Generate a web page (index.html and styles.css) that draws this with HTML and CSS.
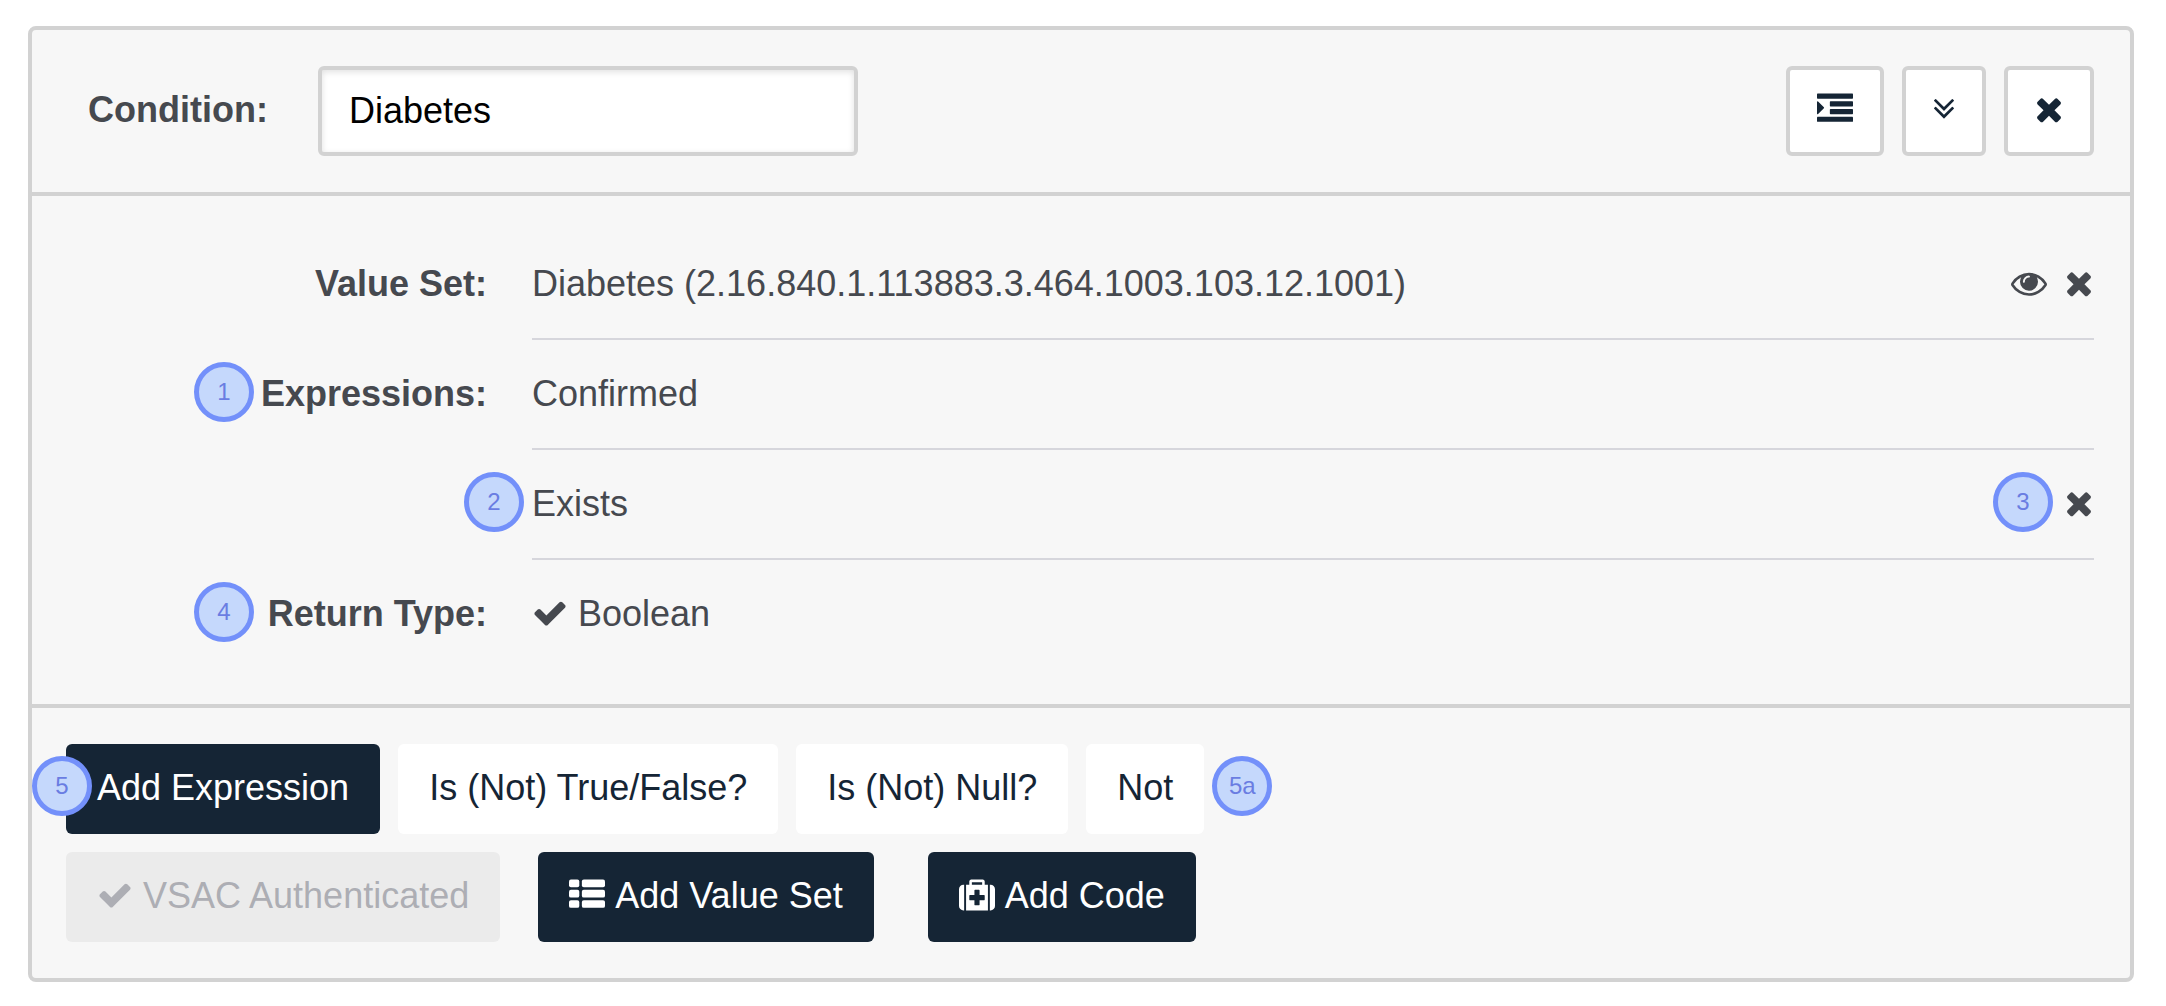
FILE: index.html
```html
<!DOCTYPE html>
<html lang="en">
<head>
<meta charset="utf-8">
<meta name="viewport" content="width=device-width, initial-scale=1">
<title>Condition</title>
<link rel="stylesheet" href="styles.css">
</head>
<body>
<svg class="sprite" aria-hidden="true">
  <symbol id="times" viewBox="199 0 1394 1792"><path d="M1490 1322q0 40-28 68l-136 136q-28 28-68 28t-68-28l-294-294-294 294q-28 28-68 28t-68-28l-136-136q-28-28-28-68t28-68l294-294-294-294q-28-28-28-68t28-68l136-136q28-28 68-28t68 28l294 294 294-294q28-28 68-28t68 28l136 136q28 28 28 68t-28 68l-294 294 294 294q28 28 28 68z"/></symbol>
  <symbol id="check" viewBox="0 0 1792 1792"><path d="M1671 566q0 40-28 68l-724 724-136 136q-28 28-68 28t-68-28l-136-136-362-362q-28-28-28-68t28-68l136-136q28-28 68-28t68 28l294 295 656-657q28-28 68-28t68 28l136 136q28 28 28 68z"/></symbol>
</svg>
<main class="card">
  <header class="card-header">
    <label class="title" for="condition">Condition:</label>
    <input class="name-input" id="condition" type="text" value="Diabetes">
    <div class="header-actions">
      <button class="icon-button" type="button" aria-label="Indent">
        <svg class="icon" viewBox="0 0 1792 1792"><path d="M352 832q0 14-9 23l-288 288q-9 9-23 9-13 0-22.500-9.500t-9.500-22.500v-576q0-13 9.500-22.500t22.500-9.500q14 0 23 9l288 288q9 9 9 23z"/><rect y="128" width="1792" height="256" rx="32"/><rect x="640" y="512" width="1152" height="256" rx="32"/><rect x="640" y="896" width="1152" height="256" rx="32"/><rect y="1280" width="1792" height="256" rx="32"/></svg>
      </button>
      <button class="icon-button" type="button" aria-label="Collapse">
        <svg class="icon icon-narrow" viewBox="349 0 1095 1792"><path d="M1395 864q0 13-10 23l-466 466q-10 10-23 10t-23-10l-466-466q-10-10-10-23t10-23l50-50q10-10 23-10t23 10l393 393 393-393q10-10 23-10t23 10l50 50q10 10 10 23zm0-384q0 13-10 23l-466 466q-10 10-23 10t-23-10l-466-466q-10-10-10-23t10-23l50-50q10-10 23-10t23 10l393 393 393-393q10-10 23-10t23 10l50 50q10 10 10 23z"/></svg>
      </button>
      <button class="icon-button" type="button" aria-label="Delete condition">
        <svg class="icon icon-times"><use href="#times"/></svg>
      </button>
    </div>
  </header>

  <section class="details">
    <div class="row">
      <div class="row-label">Value Set:</div>
      <div class="row-value">
        <span>Diabetes (2.16.840.1.113883.3.464.1003.103.12.1001)</span>
        <div class="row-actions">
          <button class="plain-button" type="button" aria-label="View value set">
            <svg class="icon" viewBox="0 0 1792 1792"><path d="M1664 960q-152-236-381-353 61 104 61 225 0 185-131.500 316.500t-316.500 131.500-316.500-131.500-131.500-316.500q0-121 61-225-229 117-381 353 133 205 333.500 326.500t434.500 121.500 434.500-121.500 333.500-326.500zm-720-384q0-20-14-34t-34-14q-125 0-214.500 89.500t-89.500 214.500q0 20 14 34t34 14 34-14 14-34q0-86 61-147t147-61q20 0 34-14t14-34zm848 384q0 34-20 69-140 230-376.500 368.500t-499.500 138.500-499.500-139-376.500-368q-20-35-20-69t20-69q140-229 376.500-368t499.500-139 499.500 139 376.500 368q20 35 20 69z"/></svg>
          </button>
          <button class="plain-button" type="button" aria-label="Remove value set"><svg class="icon icon-times"><use href="#times"/></svg></button>
        </div>
      </div>
    </div>
    <div class="row">
      <span class="badge badge-label">1</span>
      <div class="row-label">Expressions:</div>
      <div class="row-value"><span>Confirmed</span></div>
    </div>
    <div class="row">
      <span class="badge badge-value">2</span>
      <div class="row-label"></div>
      <div class="row-value">
        <span>Exists</span>
        <div class="row-actions">
          <button class="plain-button" type="button" aria-label="Remove expression"><svg class="icon icon-times"><use href="#times"/></svg></button>
        </div>
      </div>
      <span class="badge badge-action">3</span>
    </div>
    <div class="row">
      <span class="badge badge-label">4</span>
      <div class="row-label">Return Type:</div>
      <div class="row-value"><span><svg class="icon"><use href="#check"/></svg> Boolean</span></div>
    </div>
  </section>

  <footer class="card-footer">
    <div class="expression-buttons">
      <div class="marked">
        <button class="button button-dark" type="button">Add Expression</button>
        <span class="badge badge-before">5</span>
      </div>
      <button class="button" type="button">Is (Not) True/False?</button>
      <button class="button" type="button">Is (Not) Null?</button>
      <div class="marked">
        <button class="button" type="button">Not</button>
        <span class="badge badge-after">5a</span>
      </div>
    </div>
    <div class="code-buttons">
      <button class="button" type="button" disabled><svg class="icon"><use href="#check"/></svg>VSAC Authenticated</button>
      <div class="add-buttons">
        <button class="button button-dark" type="button"><svg class="icon" viewBox="0 0 1792 1792"><rect y="128" width="512" height="384" rx="96"/><rect y="640" width="512" height="384" rx="96"/><rect y="1152" width="512" height="384" rx="96"/><rect x="640" y="128" width="1152" height="384" rx="96"/><rect x="640" y="640" width="1152" height="384" rx="96"/><rect x="640" y="1152" width="1152" height="384" rx="96"/></svg>Add Value Set</button>
        <button class="button button-dark" type="button"><svg class="icon" viewBox="0 0 1792 1792"><path fill-rule="evenodd" d="M1280 1120v-192q0-14-9-23t-23-9h-224v-224q0-14-9-23t-23-9h-192q-14 0-23 9t-9 23v224h-224q-14 0-23 9t-9 23v192q0 14 9 23t23 9h224v224q0 14 9 23t23 9h192q14 0 23-9t9-23v-224h224q14 0 23-9t9-23zM640 384h512v-128h-512zM256 384v1280h-32q-92 0-158-66t-66-158v-832q0-92 66-158t158-66zM1440 384v1280h-1088v-1280h160v-160q0-40 28-68t68-28h576q40 0 68 28t28 68v160zM1792 608v832q0 92-66 158t-158 66h-32v-1280h32q92 0 158 66t66 158z"/></svg>Add Code</button>
      </div>
    </div>
  </footer>
</main>
</body>
</html>
```

FILE: styles.css
```css
* {
  box-sizing: border-box;
}

body {
  margin: 0;
  padding: 26px 32px 24px 28px;
  background: #fff;
  color: #46494f;
  font: 36px/40px "Liberation Sans", Arial, sans-serif;
}

button,
input {
  margin: 0;
  font: inherit;
}

button {
  cursor: pointer;
}

.sprite {
  position: absolute;
  width: 0;
  height: 0;
}

.icon {
  width: 36px;
  height: 36px;
  vertical-align: -5px;
  fill: currentColor;
}

.icon-narrow {
  width: 22px;
}

.icon-times {
  width: 28px;
}

.card {
  border: 4px solid #d2d2d2;
  border-radius: 8px;
  background: #f7f7f7;
}

.card-header {
  display: flex;
  align-items: center;
  padding: 36px 36px 36px 56px;
  border-bottom: 4px solid #d2d2d2;
}

.title,
.row-label {
  font-weight: bold;
}

.title {
  padding-bottom: 2px;
}

.name-input {
  width: 540px;
  height: 90px;
  margin-left: 50px;
  padding: 0 27px 1px;
  border: 4px solid #d2d2d2;
  border-radius: 6px;
  background: #fff;
  box-shadow: inset 0 2px 6px rgba(0, 0, 0, 0.12);
  color: #000;
}

.header-actions {
  display: flex;
  gap: 18px;
  margin-left: auto;
}

.icon-button {
  display: flex;
  align-items: center;
  height: 90px;
  padding: 0 27px 4px;
  border: 4px solid #d2d2d2;
  border-radius: 6px;
  background: #fff;
  color: #152535;
}

.details {
  padding: 34px 36px 36px 0;
  border-bottom: 4px solid #d2d2d2;
}

.row {
  position: relative;
  display: grid;
  grid-template-columns: 455px 1fr;
  column-gap: 45px;
}

.row-label {
  padding: 34px 0;
  text-align: right;
}

.row-value {
  display: flex;
  justify-content: space-between;
  padding: 34px 0;
  border-bottom: 2px solid #d6d6dc;
}

.row:last-child .row-value {
  border-bottom: 0;
}

.row-actions {
  display: flex;
  gap: 18px;
  padding: 1px 1px 0 0;
}

.plain-button {
  display: flex;
  padding: 0;
  border: 0;
  background: none;
  color: inherit;
}

.badge {
  position: absolute;
  top: 22px;
  width: 60px;
  height: 60px;
  border: 5px solid #7390fa;
  border-radius: 50%;
  background: #c5d8fc;
  color: #6a7de2;
  font-size: 24px;
  line-height: 50px;
  text-align: center;
}

.badge-label {
  left: 162px;
}

.badge-value {
  left: 432px;
}

.badge-action {
  right: 41px;
}

.marked {
  position: relative;
}

.badge-before {
  top: 12px;
  left: -34px;
}

.badge-after {
  top: 12px;
  left: calc(100% + 8px);
}

.card-footer {
  display: flex;
  flex-direction: column;
  gap: 18px;
  padding: 36px 34px;
}

.expression-buttons {
  display: flex;
  gap: 18px;
}

.code-buttons {
  display: flex;
  gap: 38px;
}

.add-buttons {
  display: flex;
  gap: 54px;
}

.button {
  display: flex;
  align-items: center;
  gap: 10px;
  height: 90px;
  padding: 0 31px 2px;
  border: 0;
  border-radius: 6px;
  background: #fff;
  color: #152535;
  white-space: nowrap;
}

.button .icon {
  margin-bottom: 3px;
}

.button-dark {
  background: #152535;
  color: #fff;
}

.button:disabled {
  background: #ebebeb;
  color: #adaeb4;
  cursor: default;
}
```
